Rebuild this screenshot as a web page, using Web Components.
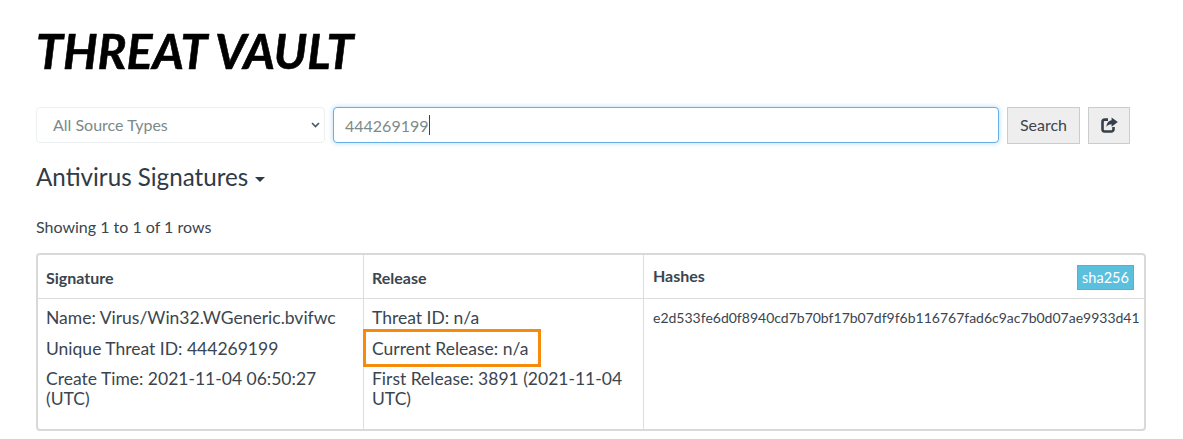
<!DOCTYPE html>
<html>
<head>
<meta charset="utf-8">
<title>Threat Vault</title>
<style>
  html, body { margin: 0; background: #fff; }
  body { font-family: Lato, sans-serif; color: #3a4550; }
</style>
</head>
<body>
<threat-page>
  <vault-title slot="title">THREAT VAULT</vault-title>
  <search-bar slot="search" source="All Source Types" value="444269199"></search-bar>
  <section-heading slot="heading">Antivirus Signatures</section-heading>
  <span slot="count">Showing 1 to 1 of 1 rows</span>
  <result-table slot="table">
    <table-cell slot="h1" head>Signature</table-cell>
    <table-cell slot="h2" head>Release</table-cell>
    <table-cell slot="h3" head wide>Hashes<span slot="badge">sha256</span></table-cell>
    <table-cell slot="c1">
      <p>Name: Virus/Win32.WGeneric.bvifwc</p>
      <p>Unique Threat ID: 444269199</p>
      <p>Create Time: 2021-11-04 06:50:27 (UTC)</p>
    </table-cell>
    <table-cell slot="c2">
      <p>Threat ID: n/a</p>
      <p>Current Release: n/a<mark-box></mark-box></p>
      <p>First Release: 3891 (2021-11-04 UTC)</p>
    </table-cell>
    <table-cell slot="c3" small>
      <p>e2d533fe6d0f8940cd7b70bf17b07df9f6b116767fad6c9ac7b0d07ae9933d41</p>
    </table-cell>
  </result-table>
</threat-page>

<script>
class ThreatPage extends HTMLElement {
  constructor() {
    super();
    this.attachShadow({ mode: "open" });
    this.shadowRoot.innerHTML = /* html */`
    <style>
      :host {
        display: block;
        width: 1183px;
        height: 439px;
        box-sizing: border-box;
        padding: 20px 37px 0 36px;
        overflow: hidden;
        font-family: Lato, sans-serif;
        color: #3a4550;
      }
      .count { font-size: 16px; line-height: 18px; margin-top: 27px; }
      .table { margin-top: 17px; }
    </style>
    <slot name="title"></slot>
    <slot name="search"></slot>
    <slot name="heading"></slot>
    <div class="count"><slot name="count"></slot></div>
    <div class="table"><slot name="table"></slot></div>`;
  }
}

class VaultTitle extends HTMLElement {
  constructor() {
    super();
    this.attachShadow({ mode: "open" });
    this.shadowRoot.innerHTML = /* html */`
    <style>
      :host {
        display: block;
        font-size: 48.3px;
        line-height: 60px;
        font-weight: 700;
        font-style: italic;
        color: #000;
        -webkit-text-stroke: 0.6px #000;
      }
    </style>
    <slot></slot>`;
  }
}

class SearchBar extends HTMLElement {
  constructor() {
    super();
    this.attachShadow({ mode: "open" });
  }

  connectedCallback() {
    const source = this.getAttribute("source") ?? "";
    const value = this.getAttribute("value") ?? "";
    this.shadowRoot.innerHTML = /* html */`
    <style>
      :host {
        display: flex;
        gap: 8px;
        margin-top: 27px;
        height: 37px;
        font-size: 16px;
      }
      .select, .input {
        box-sizing: border-box;
        height: 36px;
        display: flex;
        align-items: center;
        background: #fff;
        border-radius: 4px;
        color: #7b8a8b;
      }
      .select {
        width: 289px;
        padding: 0 4px 1px 16px;
        justify-content: space-between;
        border: 1px solid #ecf0f1;
      }
      .input {
        width: 666px;
        padding: 0 11px;
        border: 1px solid #66afe9;
        box-shadow: 0 0 5px rgba(102, 175, 233, .5);
      }
      .caret { width: 1px; height: 20px; background: #3a4550; }
      button {
        box-sizing: border-box;
        height: 37px;
        font: inherit;
        color: #3a4550;
        background: #eee;
        border: 1px solid #ccc;
        border-radius: 0;
        padding: 0 0 2px;
        display: grid;
        place-items: center;
      }
      .search { width: 73px; }
      .share { width: 42px; }
      svg { display: block; }
    </style>
    <div class="select">
      <span>${source}</span>
      <svg width="9" height="6" viewBox="0 0 9 6"><path d="M1 1l3.5 3.5L8 1" fill="none" stroke="#4a5560" stroke-width="1.6"/></svg>
    </div>
    <div class="input"><span>${value}</span><span class="caret"></span></div>
    <button class="search">Search</button>
    <button class="share" aria-label="Share">
      <svg width="17" height="16" viewBox="0 0 17 16">
        <path d="M7 2.6H3.8A2.3 2.3 0 0 0 1.5 4.9v7.3a2.3 2.3 0 0 0 2.3 2.3h6.4a2.3 2.3 0 0 0 2.3-2.3V10" fill="none" stroke="#36404a" stroke-width="2.6"/>
        <path d="M10.6 0.4L16.8 5l-6.2 4.8V7.2C8 7.2 6.6 8 5.4 10 5.6 6.4 7.6 3.6 10.6 3.3z" fill="#36404a"/>
      </svg>
    </button>`;
  }
}

class SectionHeading extends HTMLElement {
  constructor() {
    super();
    this.attachShadow({ mode: "open" });
    this.shadowRoot.innerHTML = /* html */`
    <style>
      :host {
        display: flex;
        align-items: center;
        margin-top: 18px;
        font-size: 24.2px;
        line-height: 29px;
        color: #2f3b47;
      }
      .arrow {
        margin: 5px 0 0 7px;
        border-top: 5px solid currentColor;
        border-left: 5.5px solid transparent;
        border-right: 5.5px solid transparent;
      }
    </style>
    <slot></slot><span class="arrow"></span>`;
  }
}

class ResultTable extends HTMLElement {
  constructor() {
    super();
    this.attachShadow({ mode: "open" });
    this.shadowRoot.innerHTML = /* html */`
    <style>
      :host {
        display: grid;
        grid-template-columns: 325px 280px 1fr;
        grid-template-rows: 44px 130px;
        width: 1110px;
        box-sizing: border-box;
        border: 2px solid #d9d9d9;
        border-radius: 4px;
      }
      ::slotted([slot^="h"]) { border-bottom: 1px solid #ddd; }
      ::slotted([slot="h2"]), ::slotted([slot="h3"]),
      ::slotted([slot="c2"]), ::slotted([slot="c3"]) { border-left: 1px solid #ddd; }
    </style>
    <slot name="h1"></slot><slot name="h2"></slot><slot name="h3"></slot>
    <slot name="c1"></slot><slot name="c2"></slot><slot name="c3"></slot>`;
  }
}

class TableCell extends HTMLElement {
  constructor() {
    super();
    this.attachShadow({ mode: "open" });
    this.shadowRoot.innerHTML = /* html */`
    <style>
      :host {
        display: block;
        box-sizing: border-box;
        position: relative;
        padding: 9px 8px 0 8px;
        font-size: 17.5px;
        line-height: 20px;
      }
      :host([head]) {
        display: flex;
        justify-content: space-between;
        align-items: center;
        padding: 2px 10px 0 8px;
        font-size: 16px;
        font-weight: 700;
      }
      :host([wide]) { padding: 0 10px 2px 9px; }
      :host([small]) { font-size: 14px; padding-left: 9px; padding-right: 0; white-space: nowrap; }
      ::slotted(p) { margin: 0 0 10.5px; position: relative; }
      ::slotted([slot="badge"]) {
        box-sizing: border-box;
        width: 57px;
        height: 25px;
        margin-top: 3px;
        line-height: 23px;
        text-align: center;
        font-size: 14.5px;
        font-weight: 400;
        color: #fff;
        background: #5bc0de;
        border: 1px solid #46b8da;
      }
    </style>
    <slot></slot><slot name="badge"></slot>`;
  }
}

class MarkBox extends HTMLElement {
  constructor() {
    super();
    this.attachShadow({ mode: "open" });
    this.shadowRoot.innerHTML = /* html */`
    <style>
      :host {
        position: absolute;
        left: -9px;
        top: -10px;
        width: 178px;
        height: 38px;
        box-sizing: border-box;
        border: 3px solid #f58a0b;
      }
    </style>`;
  }
}

customElements.define("threat-page", ThreatPage);
customElements.define("vault-title", VaultTitle);
customElements.define("search-bar", SearchBar);
customElements.define("section-heading", SectionHeading);
customElements.define("result-table", ResultTable);
customElements.define("table-cell", TableCell);
customElements.define("mark-box", MarkBox);
</script>
</body>
</html>
